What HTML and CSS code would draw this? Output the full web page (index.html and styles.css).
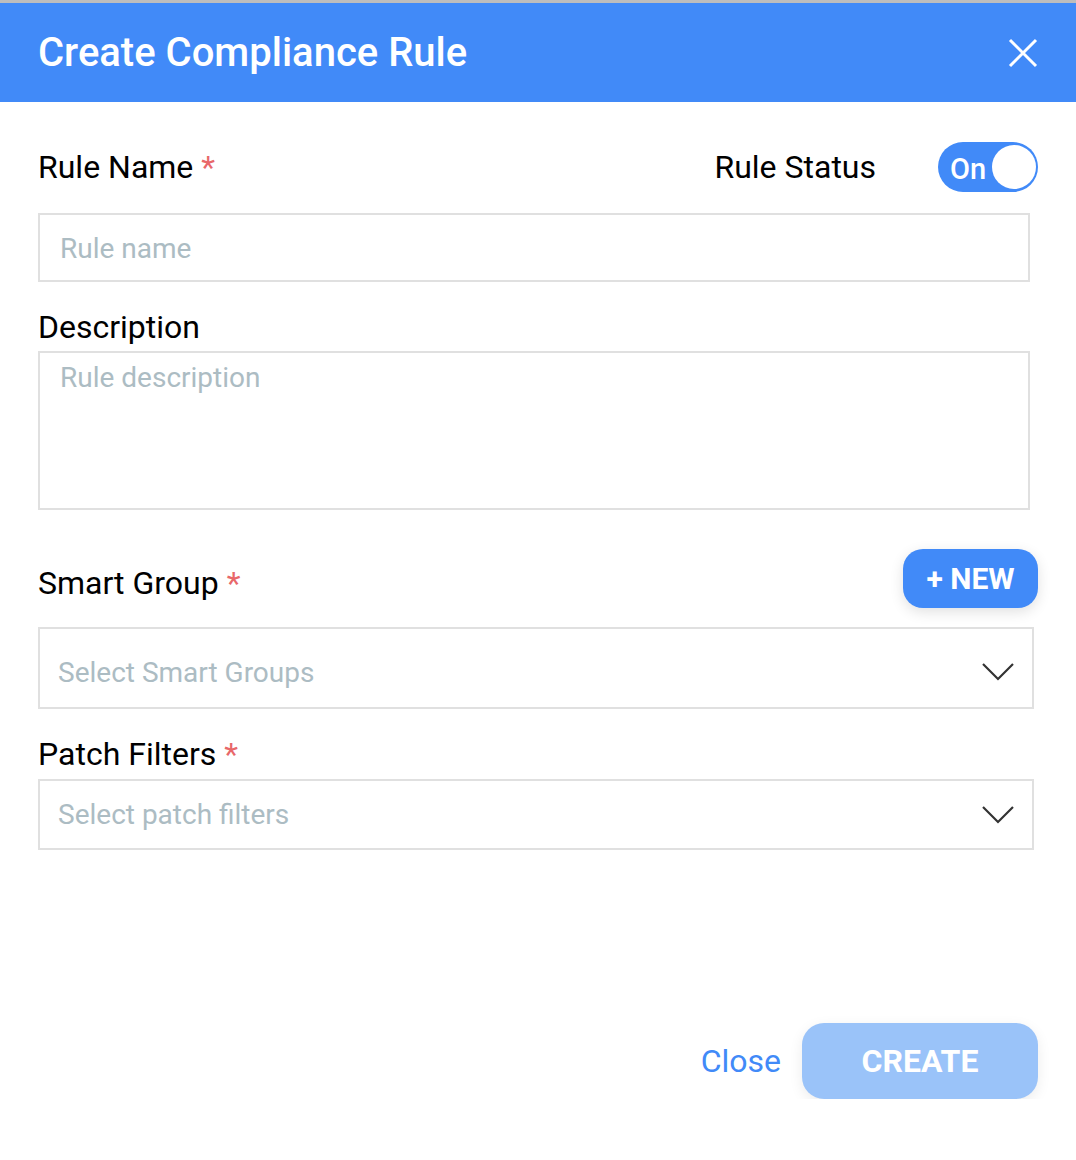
FILE: index.html
```html
<!DOCTYPE html>
<html lang="en">
<head>
    <meta charset="UTF-8">
    <meta name="viewport" content="width=device-width, initial-scale=1.0">
    <title>Create Compliance Rule</title>
    <link rel="stylesheet" href="styles.css">
</head>
<body>
    <div class="top-strip"></div>
    <div class="modal">
        <div class="modal-header">
            <h2>Create Compliance Rule</h2>
            <button class="close-x" aria-label="Close">
                <svg width="30" height="30" viewBox="0 0 30 30">
                    <path d="M2 2 L28 28 M28 2 L2 28" stroke="#fff" stroke-width="3" fill="none"/>
                </svg>
            </button>
        </div>
        <form class="modal-body">
            <div class="row first-row">
                <label for="ruleName">Rule Name <span class="req">*</span></label>
                <div class="status">
                    <span class="status-label">Rule Status</span>
                    <div class="toggle">
                        <span>On</span>
                        <span class="knob"></span>
                    </div>
                </div>
            </div>
            <input type="text" id="ruleName" class="field" placeholder="Rule name">

            <label class="block-label" for="ruleDesc">Description</label>
            <textarea id="ruleDesc" class="field area" placeholder="Rule description"></textarea>

            <div class="row group-row">
                <label>Smart Group <span class="req">*</span></label>
                <button type="button" class="new-btn">+ NEW</button>
            </div>
            <div class="select big">
                <span>Select Smart Groups</span>
                <svg width="32" height="20" viewBox="0 0 32 20"><path d="M1 2 L16 17 L31 2" stroke="#333" stroke-width="2.2" fill="none"/></svg>
            </div>

            <label class="block-label patch-label">Patch Filters <span class="req">*</span></label>
            <div class="select">
                <span>Select patch filters</span>
                <svg width="32" height="20" viewBox="0 0 32 20"><path d="M1 2 L16 17 L31 2" stroke="#333" stroke-width="2.2" fill="none"/></svg>
            </div>
        </form>
        <div class="modal-footer">
            <a href="#" class="close-link">Close</a>
            <button class="create-btn" disabled>CREATE</button>
        </div>
    </div>
</body>
</html>
```

FILE: styles.css
```css
body {
    margin: 0;
    font-family: Roboto, "Liberation Sans", sans-serif;
    background-color: #fff;
    color: #000;
}
.top-strip {
    height: 3px;
    background-color: #bdbdbd;
}
.modal-header {
    height: 99px;
    background-color: #418af8;
    display: flex;
    align-items: center;
    justify-content: space-between;
    padding: 0 38px;
}
.modal-header h2 {
    margin: 0;
    color: #fff;
    font-size: 40px;
    font-weight: 500;
}
.close-x {
    background: none;
    border: none;
    padding: 0;
    display: flex;
    cursor: pointer;
}
.modal-body {
    padding: 0 46px 0 38px;
}
.row {
    display: flex;
    align-items: center;
    justify-content: space-between;
}
.first-row {
    margin-top: 40px;
    margin-right: -8px;
    height: 50px;
}
label {
    font-size: 32px;
    line-height: 36px;
}
.req {
    color: #e8686a;
}
.status {
    display: flex;
    align-items: center;
    gap: 62px;
}
.status-label {
    font-size: 32px;
}
.toggle {
    width: 100px;
    height: 50px;
    border-radius: 25px;
    background-color: #418af8;
    display: flex;
    align-items: center;
    justify-content: space-between;
    padding: 0 2px 0 12px;
    box-sizing: border-box;
    color: #fff;
    font-size: 29px;
    font-weight: 500;
}
.toggle span:first-child {
    margin-top: 4px;
}
.knob {
    width: 44px;
    height: 44px;
    border-radius: 50%;
    background-color: #fff;
}
.field {
    display: block;
    width: 100%;
    box-sizing: border-box;
    border: 2px solid #e0e0e0;
    font-family: Roboto, "Liberation Sans", sans-serif;
    font-size: 28px;
    padding: 0 20px;
    color: #333;
    outline: none;
}
.field::placeholder {
    color: #acbcc3;
}
#ruleName {
    height: 69px;
    margin-top: 21px;
    padding-top: 2px;
}
.block-label {
    display: block;
    margin-top: 27px;
    margin-bottom: 6px;
}
.area {
    height: 159px;
    resize: none;
    padding: 8px 20px;
}
.group-row {
    margin-top: 39px;
    margin-right: -8px;
    height: 59px;
    align-items: flex-start;
}
.group-row label {
    margin-top: 16px;
}
.new-btn {
    height: 59px;
    width: 135px;
    border: none;
    border-radius: 20px;
    background-color: #418af8;
    color: #fff;
    font-family: Roboto, "Liberation Sans", sans-serif;
    font-size: 30px;
    font-weight: 700;
    box-shadow: 0 4px 14px rgba(0, 0, 0, 0.12);
    cursor: pointer;
}
.select {
    display: flex;
    align-items: center;
    justify-content: space-between;
    height: 71px;
    border: 2px solid #e0e0e0;
    box-sizing: border-box;
    margin-right: -4px;
    padding: 0 18px 0 18px;
    font-size: 28px;
    color: #acbcc3;
}
.select.big {
    height: 82px;
    margin-top: 19px;
    padding-top: 8px;
}
.patch-label {
    margin-top: 27px;
    margin-bottom: 7px;
}
.modal-footer {
    display: flex;
    justify-content: flex-end;
    align-items: center;
    gap: 21px;
    padding: 173px 38px 0 0;
}
.close-link {
    color: #418af8;
    font-size: 32px;
    text-decoration: none;
}
.create-btn {
    width: 236px;
    height: 76px;
    border: none;
    border-radius: 22px;
    background-color: #9ac3f9;
    color: #fff;
    font-family: Roboto, "Liberation Sans", sans-serif;
    font-size: 32px;
    font-weight: 700;
    box-shadow: 0 4px 14px rgba(0, 0, 0, 0.08);
}
```
